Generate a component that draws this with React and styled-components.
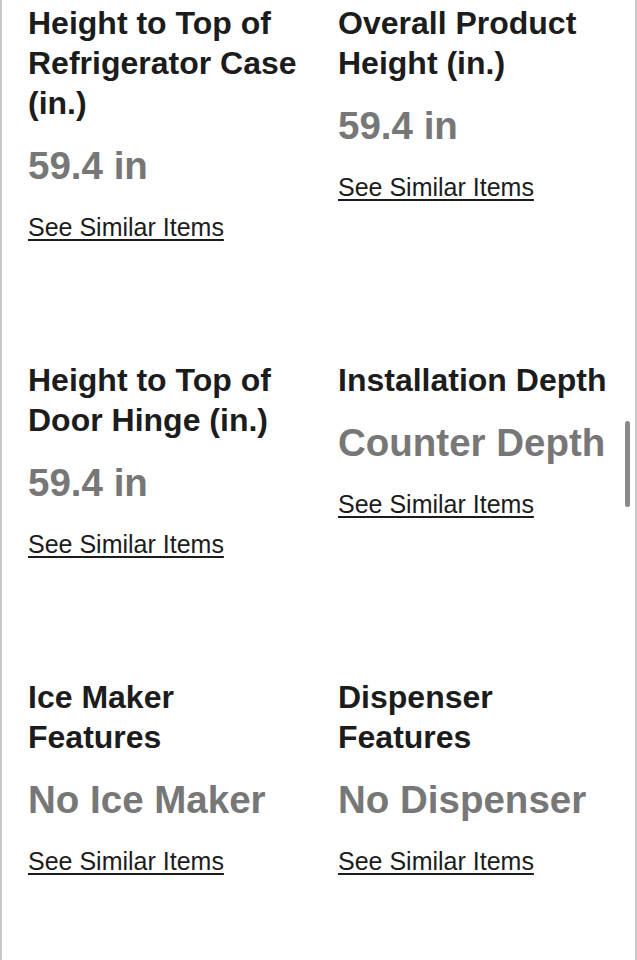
import React from 'react'
import styled, { createGlobalStyle } from 'styled-components'

const GlobalStyle = createGlobalStyle`
  html, body {
    margin: 0;
    padding: 0;
    background: #ffffff;
  }
  body {
    font-family: "Liberation Sans", Arial, sans-serif;
    -webkit-font-smoothing: antialiased;
  }
`

const Frame = styled.div`
  position: relative;
  box-sizing: border-box;
  width: 637px;
  height: 960px;
  overflow: hidden;
  border-left: 2px solid #c9c9c9;
  border-right: 2px solid #c9c9c9;
  background: #fff;
`

const SpecGrid = styled.div`
  display: grid;
  grid-template-columns: 310px 290px;
  row-gap: 118px;
  padding: 3px 0 0 26px;
`

const Spec = styled.div`
  display: flex;
  flex-direction: column;
  align-items: flex-start;
`

const Title = styled.h3`
  margin: 0;
  font-size: 32px;
  line-height: 40px;
  font-weight: 700;
  color: #1c1c1c;
`

const Value = styled.div`
  margin-top: 20px;
  font-size: 38.5px;
  line-height: 46px;
  font-weight: 700;
  color: #777777;
`

const SimilarLink = styled.a`
  margin-top: 23px;
  font-size: 25px;
  line-height: 30px;
  color: #1c1c1c;
  text-decoration: underline;
  text-decoration-thickness: 1.5px;
  text-underline-offset: 3px;
  cursor: pointer;
`

const ScrollThumb = styled.div`
  position: absolute;
  right: 5px;
  top: 421px;
  width: 5px;
  height: 86px;
  border-radius: 3px;
  background: #8a8a8a;
`

const specs = [
  { title: ['Height to Top of', 'Refrigerator Case', '(in.)'], value: '59.4 in' },
  { title: ['Overall Product', 'Height (in.)'], value: '59.4 in' },
  { title: ['Height to Top of', 'Door Hinge (in.)'], value: '59.4 in' },
  { title: ['Installation Depth'], value: 'Counter Depth' },
  { title: ['Ice Maker', 'Features'], value: 'No Ice Maker' },
  { title: ['Dispenser', 'Features'], value: 'No Dispenser' },
]

export default function App() {
  return (
    <>
      <GlobalStyle />
      <Frame>
        <SpecGrid>
          {specs.map((s, i) => (
            <Spec key={i}>
              <Title>
                {s.title.map((line, j) => (
                  <React.Fragment key={j}>
                    {line}
                    {j < s.title.length - 1 && <br />}
                  </React.Fragment>
                ))}
              </Title>
              <Value>{s.value}</Value>
              <SimilarLink>See Similar Items</SimilarLink>
            </Spec>
          ))}
        </SpecGrid>
        <ScrollThumb />
      </Frame>
    </>
  )
}
